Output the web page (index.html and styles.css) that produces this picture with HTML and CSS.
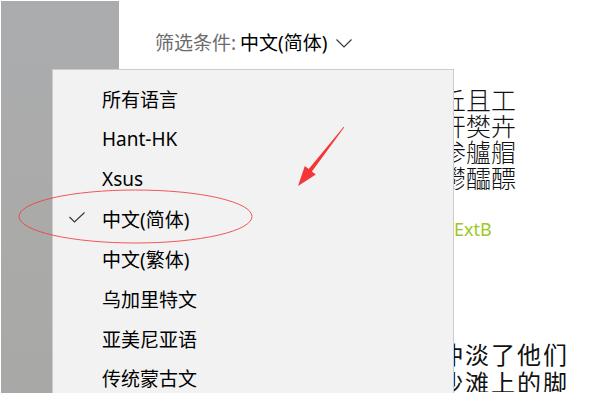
FILE: index.html
```html
<!DOCTYPE html>
<html lang="zh-CN">
<head>
<meta charset="utf-8">
<title>筛选条件</title>
<link rel="stylesheet" href="styles.css">
</head>
<body>
<div class="screen">
  <div class="sidebar"></div>
  <div class="main">
    <div class="filter">
      <span class="filter-label">筛选条件:</span>
      <span class="filter-value">中文(简体)</span>
      <svg class="chevron" width="16" height="9" viewBox="0 0 16 9"><path d="M0.5 0.5 L8 8 L15.5 0.5" fill="none" stroke="#333" stroke-width="1.1"/></svg>
    </div>
    <div class="peek glyphs">
      <div class="peek-inner glyph-inner">
        <div>丂丁丘且工</div>
        <div>丌乒开樊卉</div>
        <div>彡乡参艫艒</div>
        <div>鬯鬱鬰醽醥</div>
      </div>
    </div>
    <div class="peek ext">ExtB</div>
    <div class="peek prose">
      <div class="peek-inner prose-inner">海浪悄悄冲淡了他们留在那片沙滩上的脚印。</div>
    </div>
  </div>

  <div class="menu">
    <div class="item"><span class="check"></span><span>所有语言</span></div>
    <div class="item"><span class="check"></span><span>Hant-HK</span></div>
    <div class="item"><span class="check"></span><span>Xsus</span></div>
    <div class="item"><span class="check"><svg width="16" height="11" viewBox="0 0 16 11"><path d="M0.5 5 L5.5 10 L15.5 0.5" fill="none" stroke="#333" stroke-width="1.1"/></svg></span><span>中文(简体)</span></div>
    <div class="item"><span class="check"></span><span>中文(繁体)</span></div>
    <div class="item"><span class="check"></span><span>乌加里特文</span></div>
    <div class="item"><span class="check"></span><span>亚美尼亚语</span></div>
    <div class="item last"><span class="check"></span><span>传统蒙古文</span></div>
  </div>

  <svg class="marks" width="614" height="393" viewBox="0 0 614 393">
    <ellipse cx="135.5" cy="216.5" rx="116.5" ry="26.5" fill="none" stroke="#f03c3c" stroke-opacity="0.85" stroke-width="1"/>
    <polygon points="344.3,127.2 311.9,171.4 315.8,174.5 298,186 304.8,165.9 308.7,169.0 343.7,126.8" fill="#f43636"/>
  </svg>
</div>
</body>
</html>
```
FILE: styles.css
```css
html, body {
  margin: 0;
  padding: 0;
  background: #ffffff;
}

body {
  font-family: "Noto Sans", "Noto Sans CJK SC", sans-serif;
  color: #000;
}

.screen {
  position: relative;
  width: 614px;
  height: 393px;
  overflow: hidden;
  display: flex;
  background: #fff;
}

.sidebar {
  width: 118px;
  margin: 1px 0 0 1px;
  background: linear-gradient(#abacae, #aaaaa9 60%, #a8a8a6);
  flex: none;
}

.main {
  flex: 1;
  display: flex;
  flex-direction: column;
}

.filter {
  margin-top: 31px;
  padding-left: 36px;
  height: 24px;
  line-height: 24px;
  font-size: 19px;
  display: flex;
  align-items: center;
  white-space: nowrap;
}

.filter-label {
  color: #6b6b6b;
  margin-right: 4px;
}

.filter-value {
  color: #000;
}

.chevron {
  margin-left: 8px;
  margin-top: 1px;
}

/* content to the right of the menu: only the visible part is shown */
.peek {
  margin-left: 334px;
  overflow: hidden;
  white-space: nowrap;
}

.glyphs {
  margin-top: 31px;
  width: 80px;
  font-family: "Noto Sans CJK SC", sans-serif;
  font-weight: 300;
  font-size: 25px;
  line-height: 26px;
  color: #111;
}

.glyph-inner {
  margin-left: -62px;
}

.ext {
  margin-top: 27px;
  padding-left: 1px;
  font-size: 18px;
  line-height: 24px;
  color: #9cc91e;
}

.prose {
  margin-top: 99px;
  width: 160px;
  height: 52px;
  font-family: "Noto Sans CJK SC", sans-serif;
  font-size: 24px;
  line-height: 28px;
  letter-spacing: 2px;
  color: #111;
}

.prose-inner {
  margin-left: -118px;
  width: 236px;
  white-space: normal;
}

.menu {
  position: absolute;
  left: 52px;
  top: 69px;
  width: 400px;
  padding-top: 9px;
  background: #f2f2f2;
  border: 1px solid #cccccc;
  border-bottom: none;
}

.item {
  display: flex;
  align-items: center;
  height: 40px;
  padding-left: 16px;
  font-size: 19px;
  color: #000;
  white-space: nowrap;
}

.item.last {
  height: 34px;
  align-items: flex-start;
  padding-top: 8px;
  box-sizing: border-box;
  line-height: 24px;
}

.check {
  width: 16px;
  height: 11px;
  margin-right: 17px;
  display: flex;
  margin-top: -3px;
}

.item.last .check {
  margin-top: 0;
}

.marks {
  position: absolute;
  left: 0;
  top: 0;
  pointer-events: none;
}
```
